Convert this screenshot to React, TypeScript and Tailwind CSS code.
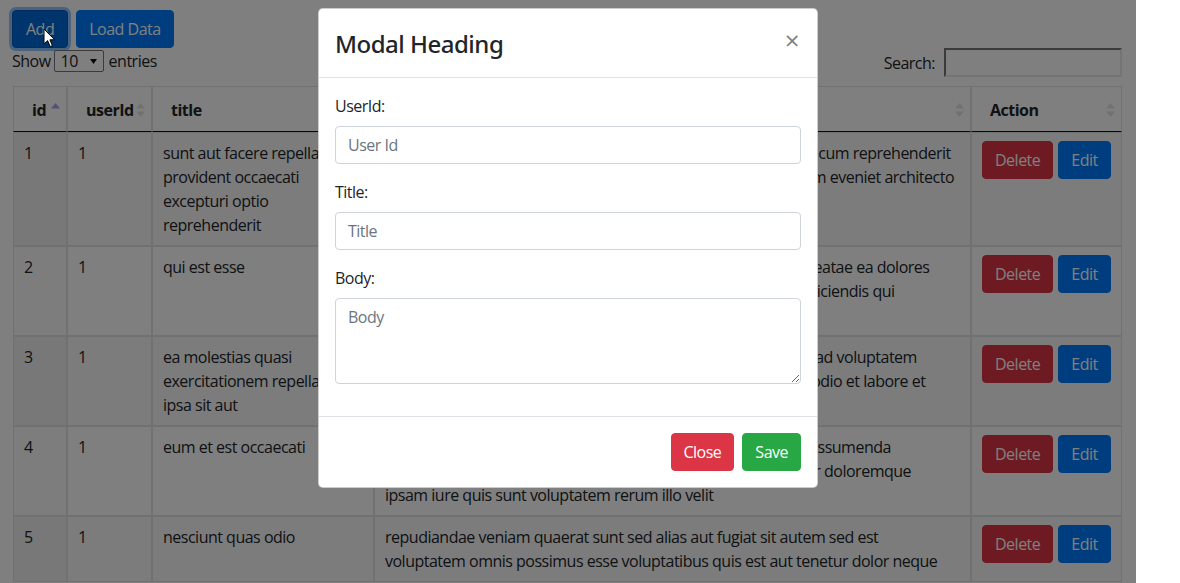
import type { ReactNode } from 'react'

interface Post {
  id: number
  userId: number
  title: string[]
  body: string[]
}

// Lines are kept as the table shows them, so wrapping stays the same in any font.
const posts: Post[] = [
  {
    id: 1,
    userId: 1,
    title: ['sunt aut facere repellat', 'provident occaecati', 'excepturi optio', 'reprehenderit'],
    body: [
      'quia et suscipit suscipit recusandae consequuntur expedita et cum reprehenderit',
      'molestiae ut ut quas totam nostrum rerum est autem sunt rem eveniet architecto'
    ]
  },
  {
    id: 2,
    userId: 1,
    title: ['qui est esse'],
    body: [
      'est rerum tempore vitae sequi sint nihil reprehenderit dolor beatae ea dolores',
      'neque fugiat blanditiis voluptate porro vel nihil molestiae ut reiciendis qui',
      'aperiam non debitis possimus qui neque nisi nulla'
    ]
  },
  {
    id: 3,
    userId: 1,
    title: ['ea molestias quasi', 'exercitationem repellat qui', 'ipsa sit aut'],
    body: [
      'et iusto sed quo iure voluptatem occaecati omnis eligendi aut ad voluptatem',
      'doloribus vel accusantium quis pariatur molestiae porro eius odio et labore et',
      'velit aut'
    ]
  },
  {
    id: 4,
    userId: 1,
    title: ['eum et est occaecati'],
    body: [
      'ullam et saepe reiciendis voluptatem adipisci sit amet autem assumenda',
      'provident rerum culpa quis hic commodi nesciunt rem tenetur doloremque',
      'ipsam iure quis sunt voluptatem rerum illo velit'
    ]
  },
  {
    id: 5,
    userId: 1,
    title: ['nesciunt quas odio'],
    body: [
      'repudiandae veniam quaerat sunt sed alias aut fugiat sit autem sed est',
      'voluptatem omnis possimus esse voluptatibus quis est aut tenetur dolor neque'
    ]
  }
]

function SortIcon({ dir }: { dir: 'asc' | 'both' }): JSX.Element {
  const up = dir === 'asc' ? '#a3a3ee' : '#e2e2e2'
  const down = dir === 'asc' ? 'transparent' : '#e2e2e2'
  return (
    <svg width="9" height="14" viewBox="0 0 9 14" className="shrink-0">
      <path d="M4.5 0 L9 5.5 H0 Z" fill={up} />
      <path d="M0 8.5 H9 L4.5 14 Z" fill={down} />
    </svg>
  )
}

function Th({
  children,
  sort,
  className = ''
}: {
  children?: ReactNode
  sort?: 'asc' | 'both'
  className?: string
}): JSX.Element {
  return (
    <th
      className={`border border-[#dee2e6] border-b-[#111] bg-white pb-[9px] pl-[18px] pr-[6px] pt-[11px] text-left align-middle font-bold ${className}`}
    >
      <div className="flex items-center justify-between">
        <span>{children}</span>
        {sort && <SortIcon dir={sort} />}
      </div>
    </th>
  )
}

function Lines({ lines }: { lines: string[] }): JSX.Element {
  return (
    <>
      {lines.map((l, i) => (
        <span key={i} className="block whitespace-nowrap">
          {l}
        </span>
      ))}
    </>
  )
}

function Field({ label, children }: { label: string; children: ReactNode }): JSX.Element {
  return (
    <div className="mb-4">
      <label className="mb-2 inline-block">{label}</label>
      {children}
    </div>
  )
}

const inputCls =
  'block w-full rounded-[4px] border border-[#ced4da] bg-white px-3 py-1.5 text-base leading-6 text-[#495057] outline-none placeholder:text-[#6c757d]'

export default function App(): JSX.Element {
  return (
    <div className="flex h-[583px] w-[1180px] overflow-hidden bg-white font-['Open_Sans',sans-serif] text-base leading-6 tracking-[-0.5px] text-[#212529]">
      <div className="relative h-full w-[1136px] shrink-0">
        {/* page */}
        <div className="pl-[12px] pt-[10px]">
          <div className="flex gap-2">
            <button className="rounded-[4px] border border-[#005cbf] bg-[#0069d9] px-[13px] py-1.5 text-white ring-[3px] ring-[#268fff]/50">
              Add
            </button>
            <button className="rounded-[4px] border border-[#007bff] bg-[#007bff] px-3 py-1.5 text-white">
              Load Data
            </button>
          </div>

          <div className="flex w-[1110px] items-start justify-between">
            <div className="flex h-[26px] items-center">
              <span>Show</span>
              <span className="mx-[3px] flex h-[22px] w-[50px] items-center justify-between rounded-[2px] border border-[#767676] bg-white pl-[6px] pr-[6px]">
                <span>10</span>
                <svg width="7" height="5" viewBox="0 0 7 5">
                  <path d="M0 0 H7 L3.5 5 Z" fill="#111" />
                </svg>
              </span>
              <span className="ml-[2px]">entries</span>
            </div>
            <div className="flex items-center">
              <span>Search:</span>
              <span className="ml-[9px] h-[29px] w-[178px] border-2 border-b-[#e8e8e8] border-l-[#767676] border-r-[#e8e8e8] border-t-[#767676] bg-white" />
            </div>
          </div>

          <table className="ml-[1px] mt-[9px] w-[1109px] table-fixed border-separate border-spacing-0">
            <thead>
              <tr>
                <Th sort="asc" className="w-[54px]">id</Th>
                <Th sort="both" className="w-[85px]">userId</Th>
                <Th sort="both" className="w-[222px]">title</Th>
                <Th sort="both" className="w-[597px]">body</Th>
                <Th sort="both" className="w-[151px]">Action</Th>
              </tr>
            </thead>
            <tbody>
              {posts.map((p) => {
                const odd = p.id % 2 === 1
                const rowBg = odd ? 'bg-[#f9f9f9]' : 'bg-white'
                const td = `border border-[#dee2e6] px-[10px] py-[8px] align-top ${rowBg}`
                return (
                  <tr key={p.id}>
                    <td className={`border border-[#dee2e6] px-[10px] py-[8px] align-top ${odd ? 'bg-[#f1f1f1]' : 'bg-[#fafafa]'}`}>
                      {p.id}
                    </td>
                    <td className={td}>{p.userId}</td>
                    <td className={td}>
                      <Lines lines={p.title} />
                    </td>
                    <td className={td}>
                      <Lines lines={p.body} />
                    </td>
                    <td className={td}>
                      <div className="flex gap-[5px]">
                        <button className="rounded-[4px] border border-[#dc3545] bg-[#dc3545] px-3 py-1.5 text-white">
                          Delete
                        </button>
                        <button className="rounded-[4px] border border-[#007bff] bg-[#007bff] px-3 py-1.5 text-white">
                          Edit
                        </button>
                      </div>
                    </td>
                  </tr>
                )
              })}
            </tbody>
          </table>
        </div>

        {/* backdrop */}
        <div className="absolute inset-0 bg-black/50" />

        {/* modal */}
        <div className="absolute left-[318px] top-[8px] w-[500px] rounded-[5px] border border-black/20 bg-white">
          <div className="flex items-start justify-between border-b border-[#dee2e6] px-4 pb-[15px] pt-[17px]">
            <h4 className="font-['Noto_Sans',sans-serif] text-[24px] font-medium leading-[36px]">
              Modal Heading
            </h4>
            <button className="-mb-[15px] -mr-4 -mt-[17px] ml-auto pb-4 pl-4 pr-[18px] pt-[18px] text-[26px] font-normal leading-none text-black opacity-50">
              ×
            </button>
          </div>
          <div className="p-4">
            <Field label="UserId:">
              <input className={`${inputCls} h-[38px]`} placeholder="User Id" />
            </Field>
            <Field label="Title:">
              <input className={`${inputCls} h-[38px]`} placeholder="Title" />
            </Field>
            <Field label="Body:">
              <textarea className={`${inputCls} h-[86px]`} rows={3} placeholder="Body" />
            </Field>
          </div>
          <div className="flex items-center justify-end gap-2 border-t border-[#dee2e6] px-4 py-4">
            <button className="rounded-[4px] border border-[#dc3545] bg-[#dc3545] px-3 py-1.5 text-white">
              Close
            </button>
            <button className="rounded-[4px] border border-[#28a745] bg-[#28a745] px-3 py-1.5 text-white">
              Save
            </button>
          </div>
        </div>

        {/* mouse pointer */}
        <svg width="13" height="20" viewBox="0 0 13 20" className="absolute left-[43px] top-[28px]">
          <path d="M1 1 V16 L4.6 12.6 L7.2 18.6 L9.4 17.6 L6.9 11.8 H11.6 Z" fill="#fff" stroke="#000" strokeWidth="1" strokeLinejoin="round" />
        </svg>
      </div>
    </div>
  )
}
